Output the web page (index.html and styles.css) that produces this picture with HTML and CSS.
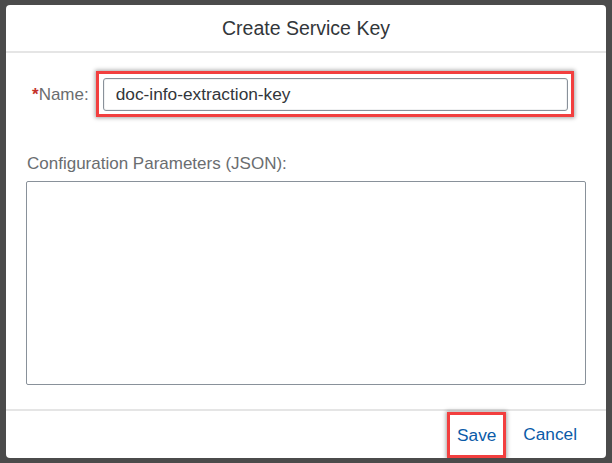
FILE: index.html
```html
<!DOCTYPE html>
<html lang="en">
<head>
<meta charset="utf-8">
<title>Create Service Key</title>
<link rel="stylesheet" href="styles.css">
</head>
<body>
<div class="dialog">
  <header class="dlg-header">
    <h1 class="dlg-title">Create Service Key</h1>
  </header>
  <main class="dlg-content">
    <div class="name-row">
      <label class="name-label" for="keyname"><span class="req">*</span>Name:</label>
      <div class="highlight highlight-input">
        <input id="keyname" class="text-input" type="text" value="doc-info-extraction-key">
      </div>
    </div>
    <label class="json-label" for="params">Configuration Parameters (JSON):</label>
    <textarea id="params" class="json-area"></textarea>
  </main>
  <footer class="dlg-footer">
    <div class="highlight highlight-btn">
      <button class="link-btn" type="button">Save</button>
    </div>
    <button class="link-btn cancel" type="button">Cancel</button>
  </footer>
</div>
</body>
</html>
```
FILE: styles.css
```css
html, body {
  margin: 0;
  padding: 0;
  height: 100%;
}
body {
  background: #4b4b4b;
  padding: 5px 6px 5px 6px;
  box-sizing: border-box;
  font-family: "Liberation Sans", Arial, sans-serif;
  color: #32363a;
}
.dialog {
  background: #ffffff;
  width: 600px;
  height: 453px;
  border-radius: 4px;
  display: flex;
  flex-direction: column;
  overflow: hidden;
}
.dlg-header {
  height: 46px;
  border-bottom: 2px solid #e5e5e5;
  display: flex;
  align-items: center;
  justify-content: center;
  flex: none;
}
.dlg-title {
  margin: 0;
  font-weight: normal;
  font-size: 19.5px;
  color: #32363a;
}
.dlg-content {
  flex: 1;
  display: flex;
  flex-direction: column;
  padding: 18px 20px 0 20px;
}
.name-row {
  display: flex;
  align-items: center;
  gap: 7px;
  padding-left: 6px;
}
.name-label {
  font-size: 17px;
  color: #6a6d70;
  padding-top: 1px;
}
.req {
  color: #c4312b;
  font-weight: bold;
}
.highlight {
  border: 3px solid #f23f3f;
  box-shadow: 0 0 4px 1px rgba(0, 0, 0, 0.35);
}
.highlight-input {
  width: 478px;
  padding: 4px 3px 3px 4px;
  box-sizing: border-box;
  height: 46px;
}
.text-input {
  width: 100%;
  height: 33px;
  box-sizing: border-box;
  border: 1px solid #89919a;
  border-radius: 3px;
  padding: 0 12px;
  font-family: "Liberation Sans", Arial, sans-serif;
  font-size: 17.3px;
  color: #32363a;
  outline: none;
  box-shadow: inset 0 0 0 1px #f0f1f2;
}
.json-label {
  margin-top: 37px;
  margin-left: 1px;
  font-size: 17px;
  color: #6a6d70;
}
.json-area {
  margin-top: 7px;
  height: 204px;
  width: 560px;
  box-sizing: border-box;
  border: 1px solid #89919a;
  border-radius: 2px;
  resize: none;
  outline: none;
}
.dlg-footer {
  flex: none;
  height: 47px;
  border-top: 2px solid #e5e5e5;
  display: flex;
  align-items: center;
  justify-content: flex-end;
  padding-right: 29px;
  gap: 17px;
}
.highlight-btn {
  width: 59px;
  height: 46px;
  box-sizing: border-box;
  display: flex;
  align-items: center;
  justify-content: center;
  margin-top: 1px;
}
.link-btn {
  background: none;
  border: 0;
  padding: 0;
  font-family: "Liberation Sans", Arial, sans-serif;
  font-size: 17.3px;
  color: #0b5ba8;
  cursor: pointer;
}
```
